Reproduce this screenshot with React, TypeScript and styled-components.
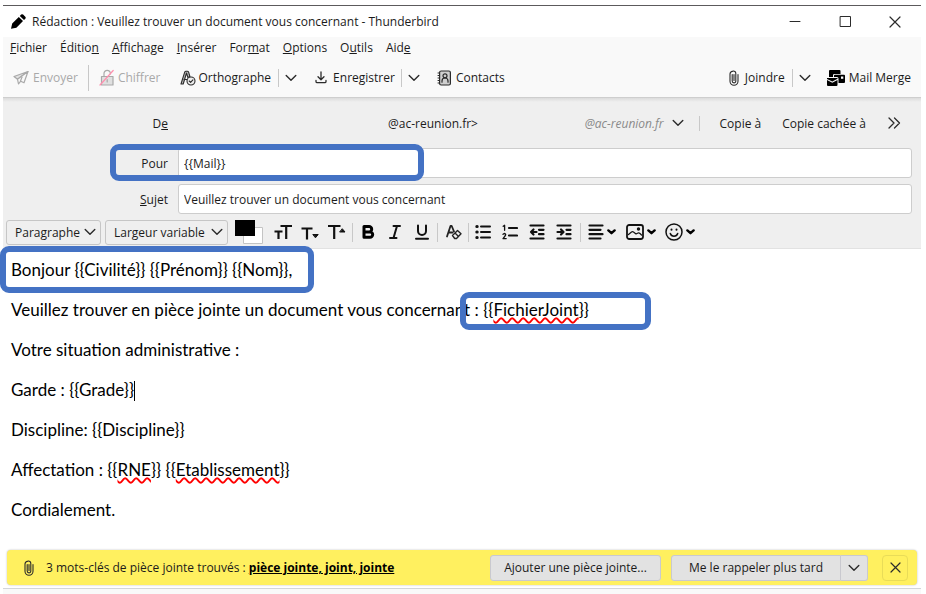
import React from "react";
import styled, { createGlobalStyle, css } from "styled-components";

const UI_FONT = '"Open Sans", "Noto Sans", sans-serif';
const BODY_FONT = 'Lato, "Open Sans", sans-serif';
const ACCENT = "#4472c4";

const GlobalStyle = createGlobalStyle`
  * { box-sizing: border-box; }
  body { margin: 0; background: #fff; color: #1b1b1b; font-family: ${UI_FONT}; font-size: 12px; }
  button, input, select { font: inherit; color: inherit; }
  svg { display: block; flex: none; }
`;

const Window = styled.main`
  display: flex;
  flex-direction: column;
  min-height: calc(100vh - 5px);
  margin: 5px 5px 0 3px;
  border-top: 1px solid #5c5a5c;
`;

const TitleBar = styled.header`
  display: flex;
  align-items: center;
  height: 31px;
  padding: 0 1px 0 8px;
`;

const Title = styled.h1`
  flex: 1;
  margin: 0 0 0 6px;
  font-size: 12px;
  font-weight: 400;
  white-space: nowrap;
`;

const PlainButton = styled.button`
  display: flex;
  align-items: center;
  justify-content: center;
  padding: 0;
  border: 0;
  background: none;
  white-space: nowrap;
`;

const WindowButton = styled(PlainButton)`
  width: 50px;
  height: 30px;
`;

const Chrome = styled.div`
  background: #f9f9f9;
  border-bottom: 1px solid #cecece;
`;

const MenuBar = styled.nav`
  display: flex;
  gap: 13px;
  height: 21px;
  padding-left: 7px;
  align-items: center;
`;

const Toolbar = styled.div`
  display: flex;
  align-items: center;
  height: 39px;
  padding: 0 10px;
`;

const ToolButton = styled(PlainButton)<{ $gap: number; $before?: number }>`
  gap: ${(p) => p.$gap}px;
  margin-left: ${(p) => p.$before ?? 0}px;
  &:disabled { color: #a9a9a9; }
`;

const Spacer = styled.div`
  flex: 1;
`;

const Divider = styled.span<{ $height: number; $left: number; $right: number }>`
  flex: none;
  width: 1px;
  height: ${(p) => p.$height}px;
  margin: 0 ${(p) => p.$right}px 0 ${(p) => p.$left}px;
  background: #c8c8c8;
`;

const Headers = styled.section`
  display: flex;
  flex-direction: column;
  background: linear-gradient(#dcdcdc, #efefef 4px);
`;

const FromRow = styled.div`
  display: flex;
  align-items: center;
  height: 50px;
  padding-right: 20px;
`;

const FieldLabel = styled.label`
  flex: none;
  width: 165px;
  text-align: right;
`;

const FromButton = styled(PlainButton)`
  flex: 1;
  justify-content: space-between;
  padding-left: 220px;
`;

const Identity = styled.span`
  display: flex;
  align-items: center;
  gap: 8px;
  color: #8a8a8a;
`;

const CopyButton = styled(PlainButton)`
  margin-right: 21px;
`;

const FieldRow = styled.div`
  position: relative;
  display: flex;
  align-items: center;
  padding-right: 9px;
  margin-bottom: 6px;
`;

const TextField = styled.input`
  flex: 1;
  min-width: 0;
  height: 30px;
  margin-left: 10px;
  padding: 0 5px;
  border: 1px solid #cdcdcd;
  border-radius: 3px;
  background: #fff;
`;

const Highlight = styled.span<{ $w: number; $h: number; $x: number; $y: number }>`
  position: absolute;
  left: ${(p) => p.$x}px;
  top: ${(p) => p.$y}px;
  width: ${(p) => p.$w}px;
  height: ${(p) => p.$h}px;
  border: 6px solid ${ACCENT};
  border-radius: 9px;
  pointer-events: none;
`;

const FormatBar = styled.div`
  display: flex;
  align-items: center;
  height: 29px;
  padding: 0 3px 4px;
  border-bottom: 1px solid #e2e2e2;
`;

const SelectBox = styled.span<{ $width: number }>`
  position: relative;
  flex: none;
  width: ${(p) => p.$width}px;
  margin-right: 4px;
  svg { position: absolute; right: 5px; top: 8px; pointer-events: none; }
`;

const Select = styled.select`
  display: block;
  appearance: none;
  width: 100%;
  height: 25px;
  padding: 0 8px;
  border: 1px solid #c6c6c6;
  border-radius: 3px;
  background: #efefef;
`;

const Swatches = styled(PlainButton)`
  width: 28px;
  margin: 0 6px 0 3px;
`;

const FormatButton = styled(PlainButton)<{ $wide?: boolean }>`
  flex: none;
  width: ${(p) => (p.$wide ? 39 : 27)}px;
  height: 25px;
  gap: ${(p) => (p.$wide ? 3 : 0)}px;
`;

const Editor = styled.article`
  flex: 1;
  display: flex;
  flex-direction: column;
  gap: 16px;
  padding: 9px 8px 24px;
  outline: 0;
  color: #000;
  font-family: ${BODY_FONT};
  font-size: 17px;
  line-height: 24px;
`;

const Paragraph = styled.p`
  position: relative;
  height: 24px;
  margin: 0;
  white-space: nowrap;
`;

const Misspelt = styled.span`
  text-decoration: underline wavy #f00 2px;
  text-decoration-skip-ink: none;
  text-underline-offset: 1px;
`;

const Caret = styled.span`
  display: inline-block;
  width: 1px;
  height: 20px;
  background: #000;
  vertical-align: -5px;
`;

const Notice = styled.aside`
  display: flex;
  align-items: center;
  height: 35px;
  margin: 0 4px 3px;
  padding: 0 9px 0 17px;
  border-radius: 4px;
  background: #fff05f;
  box-shadow: 0 0 2px #b5b5b5;
`;

const NoticeText = styled.p`
  flex: 1;
  margin: 0 0 0 12px;
  white-space: nowrap;
`;

const Keywords = styled.strong`
  font-weight: 700;
  color: #000;
  text-decoration: underline;
`;

const noticeBorder = css`
  height: 26px;
  border: 1px solid #c9c9cf;
  background: #e2e2e2;
`;

const NoticeButton = styled(PlainButton)<{ $width: number; $split?: boolean }>`
  ${noticeBorder}
  flex: none;
  width: ${(p) => p.$width}px;
  border-radius: ${(p) => (p.$split ? "3px 0 0 3px" : "3px")};
  margin-left: 10px;
`;

const NoticeMenu = styled(PlainButton)`
  ${noticeBorder}
  width: 27px;
  border-left: 0;
  border-radius: 0 3px 3px 0;
`;

const NoticeClose = styled(PlainButton)`
  width: 26px;
  height: 26px;
  margin-left: 14px;
  border: 1px solid #e9dc58;
  border-radius: 4px;
`;

const StatusBar = styled.footer`
  height: 6px;
  border-top: 1px solid #d3d6da;
  background: #f9f9f9;
`;

type IconProps = { w: number; h: number; sw?: number; color?: string; children: React.ReactNode };
const Icon = ({ w, h, sw = 1, color = "#2b2b2b", children }: IconProps) => (
  <svg width={w} height={h} viewBox={`0 0 ${w} ${h}`} fill="none" stroke={color} strokeWidth={sw} strokeLinecap="round" strokeLinejoin="round" aria-hidden="true">
    {children}
  </svg>
);

const Chevron = () => (
  <Icon w={12} h={8} sw={1.4}><path d="M1.2 1.5 6 6.3l4.8-4.8" /></Icon>
);
const MiniCaret = () => (
  <Icon w={9} h={6} sw={2.4} color="#000"><path d="M1.4 1.4 4.5 4.2l3.1-2.800" /></Icon>
);
const Clip = () => (
  <Icon w={10} h={16} sw={1.1}>
    <path d="M3.2 4.5v6.6a1.8 1.8 0 0 0 3.6 0V3.4a2.3 2.3 0 0 0-2.9-2.3C2 1.5 1 2.5 1 4v7.2a4 4 0 0 0 8 0V4.500M5 4.500v6" />
  </Icon>
);
const Cross = ({ size = 12 }: { size?: number }) => (
  <Icon w={size} h={size} sw={1.2}><path d={`M1 1l${size - 2} ${size - 2}M${size - 1} 1 1 ${size - 1}`} /></Icon>
);

const Pencil = () => (
  <Icon w={15} h={15} sw={0} color="none">
    <path fill="#000" d="M0 14.800l1.200-5.300 6.600-6.600 4.200 4.200-6.600 6.600zM8.800 1.900l1.300-1.300a1.500 1.500 0 0 1 2 0l2.200 2.200a1.500 1.500 0 0 1 0 2l-1.300 1.300z" />
  </Icon>
);
const Send = () => (
  <Icon w={16} h={16} color="#a9a9a9" sw={1.2}>
    <path fill="#e2e2e2" d="M15 1.500 1 6.500l3.500 2.700z" />
    <path fill="#f9f9f9" d="M15 1.500 4.500 9.200 5.500 14l2.200-2.800 3.300 1.600z" />
    <path d="m9 7-1.500 4" />
  </Icon>
);
const Lock = () => (
  <Icon w={15} h={17} color="#a9a9a9" sw={1.2}>
    <path fill="#e0e0e0" d="M2.500 7.500h11.500v8.500H2.500z" /><path d="M5 7.500V4.500a3.200 3.200 0 0 1 6.400 0v.5M8.200 10.500v2.500" />
    <path stroke="#ff8fae" d="M1 16 14.200 1.500" />
  </Icon>
);
const Spelling = () => (
  <Icon w={16} h={16} sw={1.1}>
    <path fill="#bdbdbd" d="M1 14 4.700 2.200Q5 1.200 6 1.200h1.300Q8.300 1.200 8.600 2.200l1.300 4.300-2 1-1.400-4.500L3.200 14z" />
    <path d="M4 9.500h3" /><circle cx="11" cy="11" r="4" fill="#ededed" /><path d="m9.200 11 1.400 1.300 2.300-2.500" />
  </Icon>
);
const Save = () => (
  <Icon w={12} h={13} sw={1.3}><path d="M6 1v7.500M3 5.800l3 3 3-3M1 9.500v1q0 1.200 1.200 1.200h7.600q1.200 0 1.200-1.200v-1" /></Icon>
);
const Contacts = () => (
  <Icon w={14} h={16} sw={1.2}>
    <rect x="2.600" y="1" width="10.800" height="14" rx="1.500" fill="#cfcfcf" />
    <path d="M.6 3h1.600M.6 5.500h1.600M.6 8h1.600M.6 10.500h1.600M.6 13h1.600" strokeLinecap="butt" /><circle cx="8" cy="5.800" r="2" /><path d="M5 12.200V11q0-3 3-3t3 3v1.200" />
  </Icon>
);
const MailMerge = () => (
  <svg width="18" height="16" viewBox="0 0 18 16" aria-hidden="true">
    <path fill="#000" d="M2 1q0-1 1-1h9.500q1 0 1 1v3H7.200Q6 4 6 5.300V7H2zM8 4.800h9q1 0 1 1V12q0 1-1 1h-5.500V8.500Q11.500 7 10 7H7V5.800q0-1 1-1zM0 8h10.500v.8L5.300 11.600 0 8.900zM0 10.100l5.300 2.700 5.200-2.700V15q0 1-1 1H1q-1 0-1-1z" />
    <path fill="#fff" d="M14 6.500h2.300v2.300H14z" />
  </svg>
);

const FORMAT_ICONS: Record<string, React.ReactNode> = {
  grow: <Icon w={18} h={16} sw={2.2} color="#111"><path d="M6.500 2H18M12.200 2v13M.5 7.500h8M4.500 7.500V15" strokeLinecap="butt" /></Icon>,
  smaller: <Icon w={18} h={16} sw={2.2} color="#111"><path d="M.5 4.500h11M6 4.500V15.500" strokeLinecap="butt" /><path d="M12.200 10.500h5l-2.500 3z" strokeWidth="1" fill="#111" /></Icon>,
  larger: <Icon w={18} h={16} sw={2.2} color="#111"><path d="M0 2h12.500M6.200 2v13" strokeLinecap="butt" /><path d="M12 8h5l-2.500-3z" strokeWidth="1" fill="#111" /></Icon>,
  bold: <Icon w={14} h={16} sw={3} color="#000"><path d="M3 2.500h5a2.700 2.700 0 0 1 0 5.400H3zM3 7.900h6a2.700 2.700 0 0 1 0 5.400H3z" /></Icon>,
  italic: <Icon w={12} h={16} sw={2} color="#111"><path d="M4.500 2H11M1 14h6.500M8 2 4.500 14" /></Icon>,
  underline: <Icon w={14} h={16} sw={2} color="#111"><path d="M3 1.500V7a4 4 0 0 0 8 0V1.500M1 14.700h12" /></Icon>,
  clear: <Icon w={16} h={16} sw={1.4} color="#222"><path d="M1 12.500 4.500 2h1.200L8 7.500M3 8.500h3.500" strokeWidth="1.800" /><path d="m6.500 11.500 5-5 3.500 3.300-4.500 4.700H8.700zM9 9l3.500 3.500" /></Icon>,
  bullets: <Icon w={16} h={16} sw={2} color="#111"><path d="M6 2.500h9M6 8h9M6 13.500h9" /><path d="M1.800 2.500h.4M1.800 8h.4M1.800 13.500h.4" strokeWidth="3" /></Icon>,
  numbers: <Icon w={16} h={16} sw={1.3} color="#111"><path d="M1.200 2.300 2.600 1.300v5M1 10.300q2.500-1.700 2.700.3 0 1-2.700 4h3.200" /><path d="M7 4h8M7 11.500h8" strokeWidth="2.200" /></Icon>,
  outdent: <Icon w={16} h={16} sw={2.2} color="#111"><path d="M1.500 1.500h13M10 5.800h4.500M10 10.200h4.500M1.500 14.500h13M7.500 8H2M4.500 5.500 2 8l2.500 2.500" /></Icon>,
  indent: <Icon w={16} h={16} sw={2.2} color="#111"><path d="M1.500 1.500h13M10.500 5.800h4M10.500 10.200h4M1.500 14.500h13M1.500 8H7M5 5.500 7.500 8 5 10.500" /></Icon>,
  align: <Icon w={16} h={16} sw={2.2} color="#111"><path d="M1.500 1.500h13M1.500 5.800h11M1.500 10.200h13M1.500 14.500h11" /></Icon>,
  image: <Icon w={18} h={16} sw={1.8} color="#111"><rect x="1" y="1" width="16" height="14" rx="2.200" /><path d="m2.500 10.500 3-2.500q1-.7 2 0l2.500 2 2-1q1-.4 2 .5l1.500 1.500" strokeWidth="1.200" /><circle cx="12.500" cy="5" r=".8" fill="#111" /></Icon>,
  smile: <Icon w={18} h={18} sw={1.5} color="#111"><circle cx="9" cy="9" r="8" /><path d="M5.300 10.500a3.900 3.900 0 0 0 7.400 0" /><path d="M6.500 6.500v.3M11.500 6.500v.3" strokeWidth="2" /></Icon>,
};

const Format = ({ name, label, wide }: { name: string; label: string; wide?: boolean }) => (
  <FormatButton type="button" aria-label={label} $wide={wide}>
    {FORMAT_ICONS[name]}
    {wide && <MiniCaret />}
  </FormatButton>
);

const MENUS: [string, string, string][] = [
  ["", "F", "ichier"],
  ["Éditio", "n", ""],
  ["", "A", "ffichage"],
  ["", "I", "nsérer"],
  ["For", "m", "at"],
  ["", "O", "ptions"],
  ["O", "u", "tils"],
  ["Aid", "e", ""],
];

export default function App() {
  return (
    <>
      <GlobalStyle />
      <Window>
        <TitleBar>
          <Pencil />
          <Title>Rédaction : Veuillez trouver un document vous concernant - Thunderbird</Title>
          <WindowButton type="button" aria-label="Réduire"><Icon w={12} h={12}><path d="M1 5.500h10" /></Icon></WindowButton>
          <WindowButton type="button" aria-label="Agrandir"><Icon w={12} h={12}><path d="M1.500.5h10v10h-10z" strokeLinejoin="miter" /></Icon></WindowButton>
          <WindowButton type="button" aria-label="Fermer"><Cross /></WindowButton>
        </TitleBar>

        <Chrome>
          <MenuBar>
            {MENUS.map(([before, key, after]) => (
              <PlainButton type="button" key={before + key + after}>
                <span>{before}<u>{key}</u>{after}</span>
              </PlainButton>
            ))}
          </MenuBar>
          <Toolbar>
            <ToolButton type="button" disabled $gap={4}><Send />Envoyer</ToolButton>
            <Divider $height={26} $left={10} $right={10} />
            <ToolButton type="button" disabled $gap={4}><Lock />Chiffrer</ToolButton>
            <ToolButton type="button" $gap={2} $before={20}><Spelling />Orthographe</ToolButton>
            <Divider $height={18} $left={7} $right={6} />
            <ToolButton type="button" aria-label="Langues" $gap={0}><Chevron /></ToolButton>
            <ToolButton type="button" $gap={6} $before={18}><Save />Enregistrer</ToolButton>
            <Divider $height={18} $left={6} $right={6} />
            <ToolButton type="button" aria-label="Options d’enregistrement" $gap={0}><Chevron /></ToolButton>
            <ToolButton type="button" $gap={5} $before={17}><Contacts />Contacts</ToolButton>
            <Spacer />
            <ToolButton type="button" $gap={6}><Clip />Joindre</ToolButton>
            <Divider $height={18} $left={7} $right={6} />
            <ToolButton type="button" aria-label="Options de pièce jointe" $gap={0}><Chevron /></ToolButton>
            <ToolButton type="button" $gap={4} $before={16}><MailMerge />Mail Merge</ToolButton>
          </Toolbar>
        </Chrome>

        <Headers>
          <FromRow>
            <FieldLabel htmlFor="from">D<u>e</u></FieldLabel>
            <FromButton id="from" type="button" aria-haspopup="listbox">
              <span>@ac-reunion.fr&gt;</span>
              <Identity><i>@ac-reunion.fr</i><Chevron /></Identity>
            </FromButton>
            <Divider $height={15} $left={15} $right={20} />
            <CopyButton type="button">Copie à</CopyButton>
            <CopyButton type="button">Copie cachée à</CopyButton>
            <PlainButton type="button" aria-label="Autres champs">
              <Icon w={14} h={12} sw={1.3}><path d="m2 1 5 5-5 5M7.500 1l5 5-5 5" /></Icon>
            </PlainButton>
          </FromRow>
          <FieldRow>
            <FieldLabel htmlFor="to">Pour</FieldLabel>
            <TextField id="to" defaultValue="{{Mail}}" />
            <Highlight $x={107} $y={-4} $w={314} $h={37} />
          </FieldRow>
          <FieldRow>
            <FieldLabel htmlFor="subject"><u>S</u>ujet</FieldLabel>
            <TextField id="subject" defaultValue="Veuillez trouver un document vous concernant" />
          </FieldRow>
          <FormatBar>
            <SelectBox $width={95}>
              <Select aria-label="Style de paragraphe"><option>Paragraphe</option></Select>
              <Chevron />
            </SelectBox>
            <SelectBox $width={123}>
              <Select aria-label="Police"><option>Largeur variable</option></Select>
              <Chevron />
            </SelectBox>
            <Swatches type="button" aria-label="Couleur du texte">
              <svg width="28" height="24" viewBox="0 0 28 24" aria-hidden="true">
                <path fill="#fff" stroke="#c4c4c4" d="M8.500 7.500h19v16h-19z" />
                <path d="M0 0h20v16H0z" />
              </svg>
            </Swatches>
            <Format name="grow" label="Taille du texte" />
            <Format name="smaller" label="Diminuer la taille" />
            <Format name="larger" label="Augmenter la taille" />
            <Divider $height={19} $left={2} $right={1} />
            <Format name="bold" label="Gras" />
            <Format name="italic" label="Italique" />
            <Format name="underline" label="Souligné" />
            <Divider $height={19} $left={2} $right={2} />
            <Format name="clear" label="Supprimer la mise en forme" />
            <Divider $height={19} $left={1} $right={0} />
            <Format name="bullets" label="Liste à puces" />
            <Format name="numbers" label="Liste numérotée" />
            <Format name="outdent" label="Diminuer le retrait" />
            <Format name="indent" label="Augmenter le retrait" />
            <Divider $height={19} $left={3} $right={1} />
            <Format name="align" label="Alignement" wide />
            <Format name="image" label="Insérer" wide />
            <Format name="smile" label="Émoticône" wide />
          </FormatBar>
        </Headers>

        <Editor role="textbox" aria-multiline="true" aria-label="Corps du message">
          <Paragraph>
            Bonjour {"{{Civilité}} {{Prénom}} {{Nom}}"},
            <Highlight $x={-11} $y={-12} $w={314} $h={47} />
          </Paragraph>
          <Paragraph>
            Veuillez trouver en pièce jointe un document vous concernant : {"{{"}<Misspelt>FichierJoint</Misspelt>{"}}"}
            <Highlight $x={449} $y={-6} $w={191} $h={38} />
          </Paragraph>
          <Paragraph>Votre situation administrative :</Paragraph>
          <Paragraph>Garde : {"{{Grade}}"}<Caret /></Paragraph>
          <Paragraph>Discipline: {"{{Discipline}}"}</Paragraph>
          <Paragraph>
            Affectation : {"{{"}<Misspelt>RNE</Misspelt>{"}} {{"}<Misspelt>Etablissement</Misspelt>{"}}"}
          </Paragraph>
          <Paragraph>Cordialement.</Paragraph>
        </Editor>

        <Notice>
          <Clip />
          <NoticeText>3 mots-clés de pièce jointe trouvés : <Keywords>pièce jointe, joint, jointe</Keywords></NoticeText>
          <NoticeButton type="button" $width={171}>Ajouter une pièce jointe...</NoticeButton>
          <NoticeButton type="button" $width={170} $split>Me le rappeler plus tard</NoticeButton>
          <NoticeMenu type="button" aria-label="Options de rappel"><Chevron /></NoticeMenu>
          <NoticeClose type="button" aria-label="Fermer"><Cross size={11} /></NoticeClose>
        </Notice>
        <StatusBar />
      </Window>
    </>
  );
}
